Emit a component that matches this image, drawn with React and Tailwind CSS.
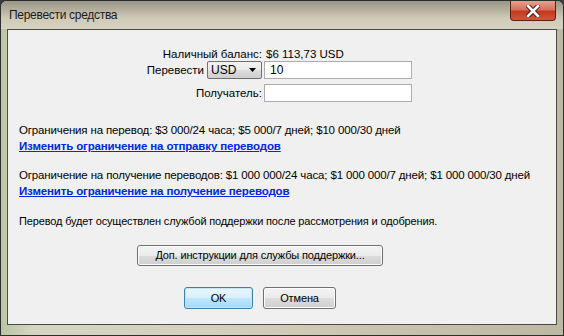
import React from 'react';

const font = { fontFamily: '"Liberation Sans", Arial, sans-serif' };

function Btn({ children, className = '', primary = false }) {
    return (
        <button
            className={
                'rounded-[3px] border text-[11px] tracking-[-0.15px] text-black leading-none whitespace-nowrap ' +
                (primary
                    ? 'border-[#3c7fb1] bg-[linear-gradient(#eaf6fd_0%,#d9f0fc_50%,#bee6fd_51%,#a7d9f5_100%)] shadow-[inset_0_0_0_1px_#c6e6f7] '
                    : 'border-[#707070] bg-[linear-gradient(#f2f2f2_0%,#ebebeb_50%,#dddddd_51%,#cfcfcf_100%)] shadow-[inset_0_0_0_1px_#fcfcfc] ') +
                className
            }
        >
            {children}
        </button>
    );
}

export default function App() {
    return (
        <div className="w-[564px] h-[336px] bg-[#3b3b3b] overflow-hidden" style={font}>
            <div className="w-[564px] h-[336px] rounded-t-[7px] border border-[#2e2e2e] flex flex-col bg-[linear-gradient(90deg,#b9c6a4_0%,#d6d5c4_6%,#d3cfbd_40%,#c9c3ad_70%,#bdb8a3_100%)]">
                <div className="h-[28px] relative flex items-start bg-[linear-gradient(#9a9788_0%,#b3ae9c_30%,#cfcab7_60%,#d8d3c0_100%)] rounded-t-[6px]">
                    <div className="pl-[8px] pt-[7px] text-[12px] tracking-[-0.3px] text-[#1a1a1a] leading-[15px]">Перевести средства</div>
                    <div className="absolute right-[7px] top-0 w-[46px] h-[20px] rounded-b-[4px] border border-t-0 border-[#5a2016] bg-[linear-gradient(#e6a08f_0%,#d6715c_45%,#c2391f_55%,#d2563a_100%)] flex items-center justify-center">
                        <svg width="14" height="12" viewBox="0 0 14 12">
                            <path d="M2 1 L12 11 M12 1 L2 11" stroke="#3a1a14" strokeWidth="4.5" strokeLinecap="square" />
                            <path d="M2 1 L12 11 M12 1 L2 11" stroke="#ffffff" strokeWidth="2.6" strokeLinecap="square" />
                        </svg>
                    </div>
                </div>
                <div className="mx-[6px] h-[296px] border border-[#4a4a4a] bg-[#f0f0f0] text-[11.5px] text-black leading-[16px]">
                    <div className="pt-[16px] flex flex-col">
                        <div className="flex items-center h-[15px]">
                            <div className="w-[254px] text-right">Наличный баланс:</div>
                            <div className="pl-[4px]">$6 113,73 USD</div>
                        </div>
                        <div className="flex items-center h-[18px]">
                            <div className="w-[199px] text-right pr-[3px]">Перевести</div>
                            <div className="w-[55px] h-[18px] rounded-[2px] border border-[#707070] bg-[linear-gradient(#f2f2f2_0%,#ebebeb_50%,#dddddd_51%,#cfcfcf_100%)] flex items-center justify-between pl-[3px] pr-[5px]">
                                <span className="text-[12px]">USD</span>
                                <svg width="7" height="4" viewBox="0 0 7 4"><path d="M0 0 H7 L3.5 4 Z" fill="#000" /></svg>
                            </div>
                            <div className="ml-[2px] w-[148px] h-[18px] border border-[#abadb3] bg-white pl-[5px] flex items-center text-[12px]">10</div>
                        </div>
                        <div className="flex items-center h-[18px] mt-[5px]">
                            <div className="w-[254px] text-right">Получатель:</div>
                            <div className="ml-[2px] w-[148px] h-[18px] border border-[#abadb3] bg-white" />
                        </div>
                    </div>
                    <div className="pl-[11px] pt-[20px] whitespace-nowrap tracking-[-0.15px]">
                        <div>Ограничения на перевод: $3 000/24 часа; $5 000/7 дней; $10 000/30 дней</div>
                        <div className="font-bold text-[#0026e6] underline">Изменить ограничение на отправку переводов</div>
                        <div className="pt-[13px]">Ограничение на получение переводов: $1 000 000/24 часа; $1 000 000/7 дней; $1 000 000/30 дней</div>
                        <div className="font-bold text-[#0026e6] underline">Изменить ограничение на получение переводов</div>
                        <div className="pt-[14px] text-[11px]">Перевод будет осуществлен службой поддержки после рассмотрения и одобрения.</div>
                    </div>
                    <div className="flex justify-center pt-[16px] pr-[44px]">
                        <Btn className="w-[246px] h-[21px]">Доп. инструкции для службы поддержки...</Btn>
                    </div>
                    <div className="flex justify-center gap-[10px] pt-[21px] pr-[44px]">
                        <Btn primary className="w-[69px] h-[22px]">OK</Btn>
                        <Btn className="w-[73px] h-[22px]">Отмена</Btn>
                    </div>
                </div>
            </div>
        </div>
    );
}
